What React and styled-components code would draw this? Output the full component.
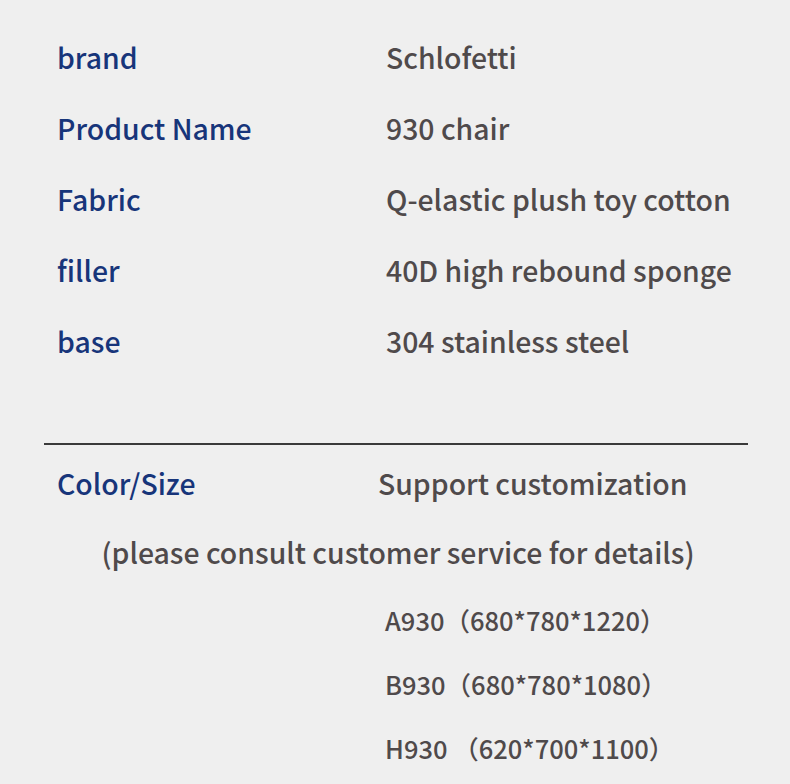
import React from "react";
import styled, { createGlobalStyle } from "styled-components";

const Global = createGlobalStyle`
  html, body {
    margin: 0;
    padding: 0;
    background: #efefef;
  }
  body {
    font-family: "Noto Sans CJK SC", "Noto Sans", sans-serif;
  }
`;

const specs = [
  ["brand", "Schlofetti"],
  ["Product Name", "930 chair"],
  ["Fabric", "Q-elastic plush toy cotton"],
  ["filler", "40D high rebound sponge"],
  ["base", "304 stainless steel"],
];

const sizes = ["A930（680*780*1220）", "B930（680*780*1080）", "H930 （620*700*1100）"];

const App = () => {
  return (
    <Page>
      <Global />
      <SpecTable>
        {specs.map(([label, value]) => (
          <SpecRow key={label}>
            <Label>{label}</Label>
            <Value>{value}</Value>
          </SpecRow>
        ))}
      </SpecTable>
      <Divider />
      <SpecRow>
        <Label>Color/Size</Label>
        <Value shift>Support customization</Value>
      </SpecRow>
      <Note>(please consult customer service for details)</Note>
      <SizeList>
        {sizes.map((s) => (
          <SizeItem key={s}>{s}</SizeItem>
        ))}
      </SizeList>
    </Page>
  );
};

export default App;

const Page = styled.div`
  width: 790px;
  height: 784px;
  overflow: hidden;
  padding-top: 37px;
  box-sizing: border-box;
`;

const SpecTable = styled.div`
  display: flex;
  flex-direction: column;
  gap: 31px;
`;

const SpecRow = styled.div`
  display: grid;
  grid-template-columns: 329px 1fr;
  padding-left: 57px;
  height: 40px;
  align-items: center;
  font-size: 28.4px;
  font-weight: 500;
`;

const Label = styled.div`
  color: #17357a;
  line-height: 40px;
`;

const Value = styled.div`
  color: #4f4a4b;
  line-height: 40px;
  margin-left: ${(p) => (p.shift ? "-8px" : "0")};
`;

const Divider = styled.hr`
  margin: 82px 42px 18px 44px;
  border: none;
  height: 2px;
  background: #3a3a3a;
`;

const Note = styled.div`
  text-align: center;
  width: 796px;
  font-size: 28.4px;
  font-weight: 500;
  line-height: 40px;
  color: #4f4a4b;
  margin-top: 29px;
`;

const SizeList = styled.div`
  display: flex;
  flex-direction: column;
  gap: 29px;
  padding-left: 385px;
  margin-top: 30px;
`;

const SizeItem = styled.div`
  font-size: 25.5px;
  font-weight: 500;
  line-height: 35px;
  color: #4f4a4b;
`;
